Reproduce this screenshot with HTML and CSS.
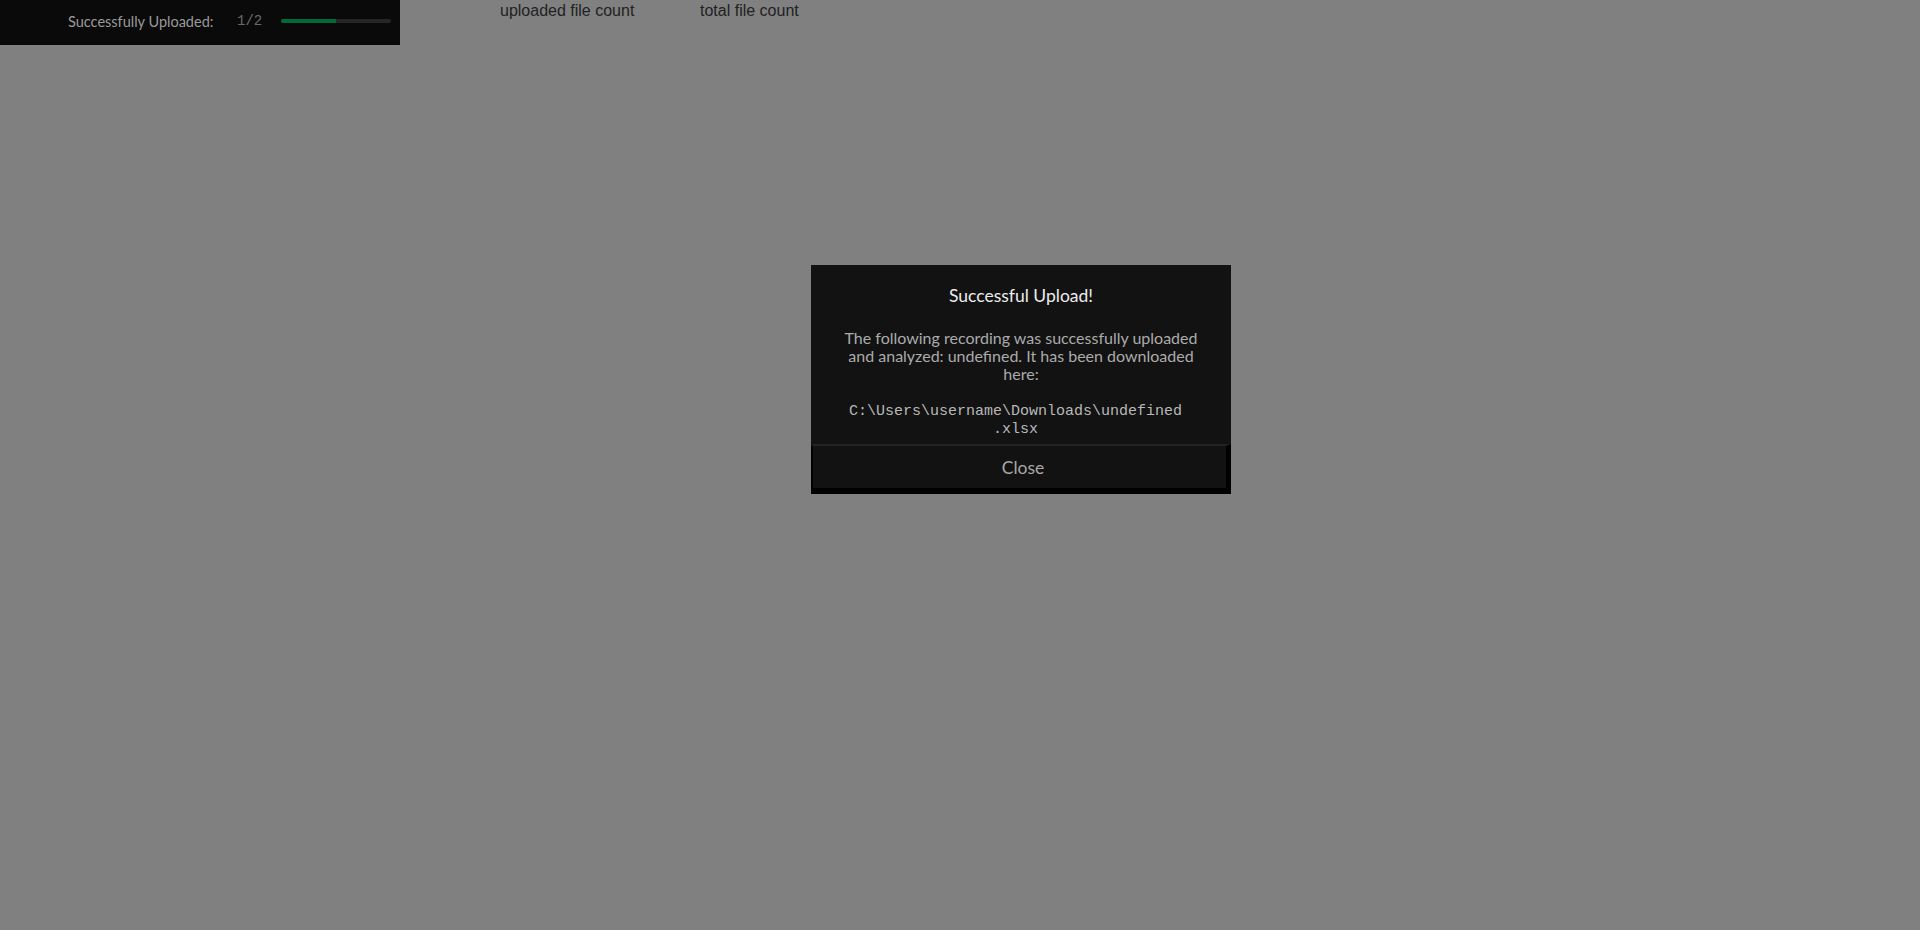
FILE: index.html
```html
<!DOCTYPE html>
<html>
<head>
<meta charset="utf-8">
<link rel="stylesheet" href="styles.css">
</head>
<body>
<div class="page">
  <div class="topbar">
    <span class="status-label">Successfully Uploaded:</span>
    <span class="status-count">1/2</span>
    <div class="progress"><div class="progress-fill" style="width:50%"></div></div>
  </div>
  <div class="labels">
    <span class="label">uploaded file count</span>
    <span class="label">total file count</span>
  </div>
</div>
<div class="modal">
  <div class="modal-body">
    <div class="modal-title">Successful Upload!</div>
    <p class="modal-text">The following recording was successfully uploaded and analyzed: undefined. It has been downloaded here:</p>
    <p class="modal-path">C:\Users\username\Downloads\undefined<wbr>.xlsx</p>
  </div>
  <button class="modal-close">Close</button>
</div>
</body>
</html>
```
FILE: styles.css
```css
html, body {
  margin: 0;
  padding: 0;
  height: 100%;
  background: #808080;
}
body {
  font-family: "Lato", "Noto Sans", sans-serif;
  overflow: hidden;
}
.page {
  display: flex;
  align-items: flex-start;
}
.topbar {
  width: 400px;
  height: 45px;
  background: #0a0a0a;
  display: flex;
  align-items: center;
  box-sizing: border-box;
  padding-left: 68px;
  padding-bottom: 3px;
}
.status-label {
  color: #9a9a9a;
  font-size: 14.5px;
  width: 169px;
}
.status-count {
  font-family: "Liberation Mono", monospace;
  color: #6a6a6a;
  font-size: 14px;
  width: 44px;
}
.progress {
  width: 110px;
  height: 4px;
  border-radius: 2px;
  background: #262626;
  overflow: hidden;
}
.progress-fill {
  height: 100%;
  background: #006a3a;
}
.labels {
  display: flex;
  padding-left: 100px;
}
.label {
  width: 200px;
  font-family: "Liberation Sans", Arial, sans-serif;
  font-size: 16px;
  line-height: 22px;
  color: #222;
}
.modal {
  position: absolute;
  left: 811px;
  top: 265px;
  width: 420px;
  background: #121212;
  display: flex;
  flex-direction: column;
}
.modal-body {
  padding: 20px 32px 5px;
  text-align: center;
}
.modal-title {
  color: #ececec;
  font-size: 17.5px;
  line-height: 22px;
  margin-bottom: 22px;
}
.modal-text {
  margin: 0 0 20px;
  color: #ababab;
  font-size: 16px;
  line-height: 18px;
}
.modal-path {
  margin: 0;
  padding-right: 11px;
  color: #b8b8b8;
  font-family: "Liberation Mono", monospace;
  font-size: 15px;
  line-height: 18px;
}
.modal-close {
  height: 50px;
  margin: 0;
  padding: 0 0 0 7px;
  background: #121212;
  color: #a8a8a8;
  font-family: "Lato", "Noto Sans", sans-serif;
  font-size: 17.5px;
  border-style: solid;
  border-width: 2px 5px 6px 2px;
  border-color: #222 #000 #000 #000;
  cursor: pointer;
}
```
